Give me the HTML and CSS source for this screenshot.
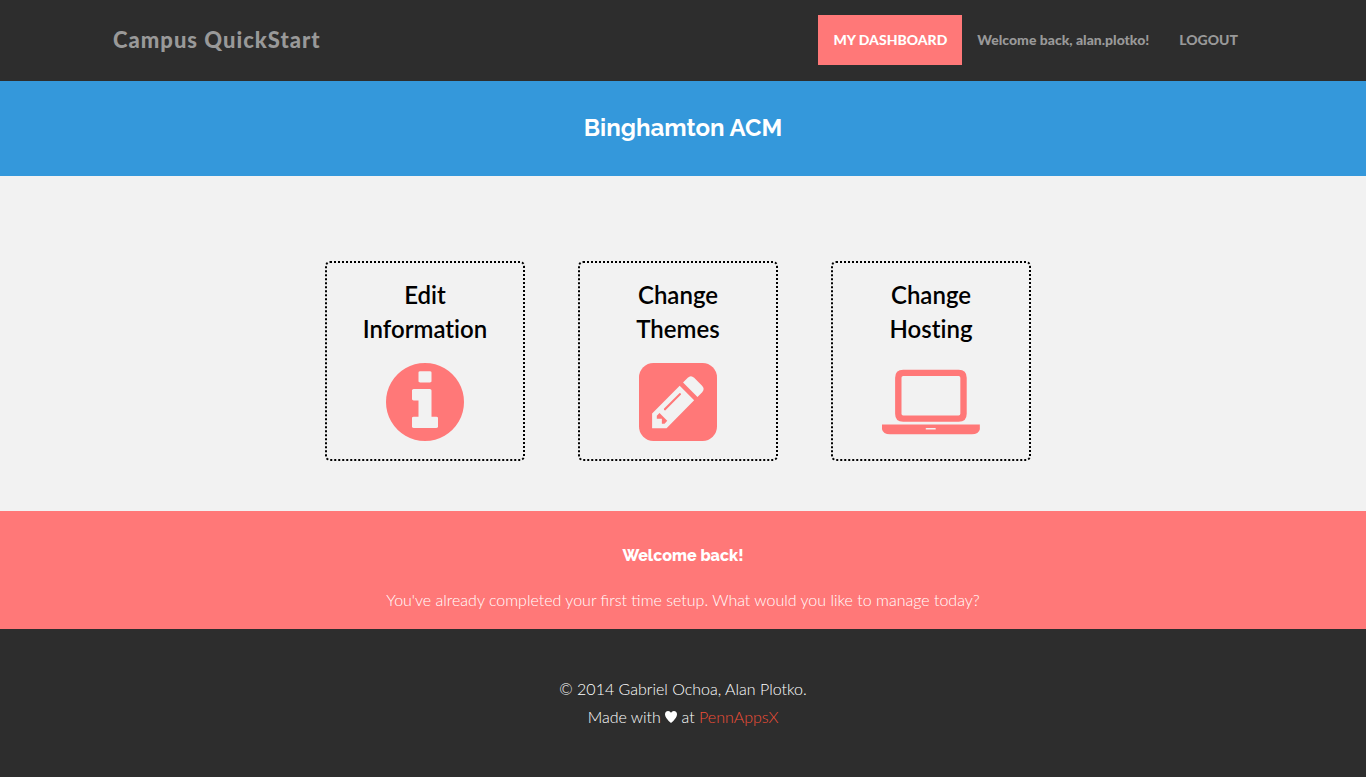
FILE: index.html
```html
<!DOCTYPE html>
<html lang="en">
<head>
    <meta charset="UTF-8">
    <meta name="viewport" content="width=device-width, initial-scale=1.0">
    <title>Campus QuickStart</title>
    <link rel="stylesheet" href="styles.css">
</head>
<body>
    <header class="navbar">
        <div class="container">
            <a class="brand" href="#">Campus QuickStart</a>
            <nav class="nav-links">
                <a class="active" href="#">MY DASHBOARD</a>
                <a href="#">Welcome back, alan.plotko!</a>
                <a href="#">LOGOUT</a>
            </nav>
        </div>
    </header>

    <section class="title-bar">
        <h1>Binghamton ACM</h1>
    </section>

    <main class="dashboard">
        <a class="card" href="#">
            <h2>Edit<br>Information</h2>
            <svg class="icon" viewBox="128 128 1536 1536" aria-hidden="true">
                <path d="M1152 1376v-160q0-14-9-23t-23-9h-96v-512q0-14-9-23t-23-9h-320q-14 0-23 9t-9 23v160q0 14 9 23t23 9h96v320h-96q-14 0-23 9t-9 23v160q0 14 9 23t23 9h448q14 0 23-9t9-23zm-128-896v-160q0-14-9-23t-23-9h-192q-14 0-23 9t-9 23v160q0 14 9 23t23 9h192q14 0 23-9t9-23zm640 416q0 209-103 385.5t-279.5 279.5-385.5 103-385.5-103-279.5-279.5-103-385.5 103-385.5 279.5-279.5 385.5-103 385.5 103 279.5 279.5 103 385.5z"/>
            </svg>
        </a>
        <a class="card" href="#">
            <h2>Change<br>Themes</h2>
            <svg class="icon" viewBox="0 0 232 232" aria-hidden="true">
                <rect width="232" height="232" rx="43"/>
                <path class="cutout" d="M39 150L121 68L164 111L82 194H39ZM131 58L145 44Q154 35 164 44L187 67Q197 77 188 87L174 101Z"/>
                <path d="M74 136L121 89Q126 89 125 94L78 141Q73 141 74 136ZM53 157L61 149L84 172L76 181H68V166H53Z"/>
            </svg>
        </a>
        <a class="card" href="#">
            <h2>Change<br>Hosting</h2>
            <svg class="icon" viewBox="0 0 291 232" aria-hidden="true">
                <path fill-rule="evenodd" d="M63 20H228Q252 20 252 44V151Q252 175 228 175H63Q39 175 39 151V44Q39 20 63 20ZM63 39Q58 39 58 44V151Q58 156 63 156H228Q233 156 233 151V44Q233 39 228 39Z"/>
                <path fill-rule="evenodd" d="M0 183H291V197Q288 212 267 212H24Q3 212 0 197ZM132 193Q130 193 130 195V196Q130 198 132 198H158Q160 198 160 196V195Q160 193 158 193Z"/>
            </svg>
        </a>
    </main>

    <section class="welcome">
        <h3>Welcome back!</h3>
        <p>You've already completed your first time setup. What would you like to manage today?</p>
    </section>

    <footer class="footer">
        <p>© 2014 Gabriel Ochoa, Alan Plotko.</p>
        <p>Made with
            <svg class="heart" viewBox="0 0 12 12" role="img" aria-label="love"><path d="M6 12Q0 7 0 3.500Q0 0 3.200 0Q5 0 6 1.800Q7 0 8.800 0Q12 0 12 3.500Q12 7 6 12Z"/></svg>
            at <a href="#">PennAppsX</a></p>
    </footer>
</body>
</html>
```
FILE: styles.css
```css
* {
    box-sizing: border-box;
}

body {
    margin: 0;
    min-height: 100vh;
    font-family: Lato, 'Liberation Sans', sans-serif;
    font-size: 16px;
    line-height: 28px;
    background: #2d2d2d;
}

a {
    text-decoration: none;
}

h1, h2, h3, p {
    margin: 0;
}

.navbar {
    padding: 15px 0 16px;
    background: #2d2d2d;
}

.container {
    display: flex;
    align-items: center;
    justify-content: space-between;
    max-width: 1170px;
    margin: 0 auto;
    padding: 0 15px;
}

.brand {
    font-size: 22px;
    font-weight: 900;
    letter-spacing: 1px;
    color: #999;
}

.nav-links {
    display: flex;
}

.nav-links a {
    padding: 15px;
    font-size: 14px;
    font-weight: 900;
    line-height: 20px;
    color: #999;
}

.nav-links .active {
    color: #fff;
    background: #ff7878;
}

.title-bar {
    padding: 27px 15px 28px;
    text-align: center;
    color: #fff;
    background: #3498db;
}

.title-bar h1 {
    font-family: Raleway, 'Open Sans', sans-serif;
    font-size: 24px;
    font-weight: 700;
    line-height: 40px;
}

.dashboard {
    display: flex;
    justify-content: center;
    gap: 53px;
    padding: 85px 10px 50px 0;
    background: #f2f2f2;
}

.card {
    width: 200px;
    height: 200px;
    padding: 15px;
    border: 2px dotted #000;
    border-radius: 5px;
    text-align: center;
    color: #000;
}

.card h2 {
    font-size: 24px;
    font-weight: 600;
    line-height: 34px;
    font-variant-ligatures: none;
}

.icon {
    display: block;
    height: 78px;
    margin: 17px auto 0;
    fill: #ff7878;
}

.icon .cutout {
    fill: #f2f2f2;
}

.welcome {
    padding: 31px 15px 15px;
    text-align: center;
    color: #fff;
    background: #ff7878;
}

.welcome h3 {
    margin-bottom: 16px;
    font-family: Raleway, 'Open Sans', sans-serif;
    font-size: 16px;
    font-weight: 800;
}

.welcome p {
    font-weight: 300;
}

.footer {
    padding: 46px 15px 45px;
    text-align: center;
    font-weight: 300;
    color: #fff;
    background: #2d2d2d;
}

.footer a {
    color: #f04e37;
}

.heart {
    width: 12px;
    height: 12px;
    fill: #fff;
}
```
